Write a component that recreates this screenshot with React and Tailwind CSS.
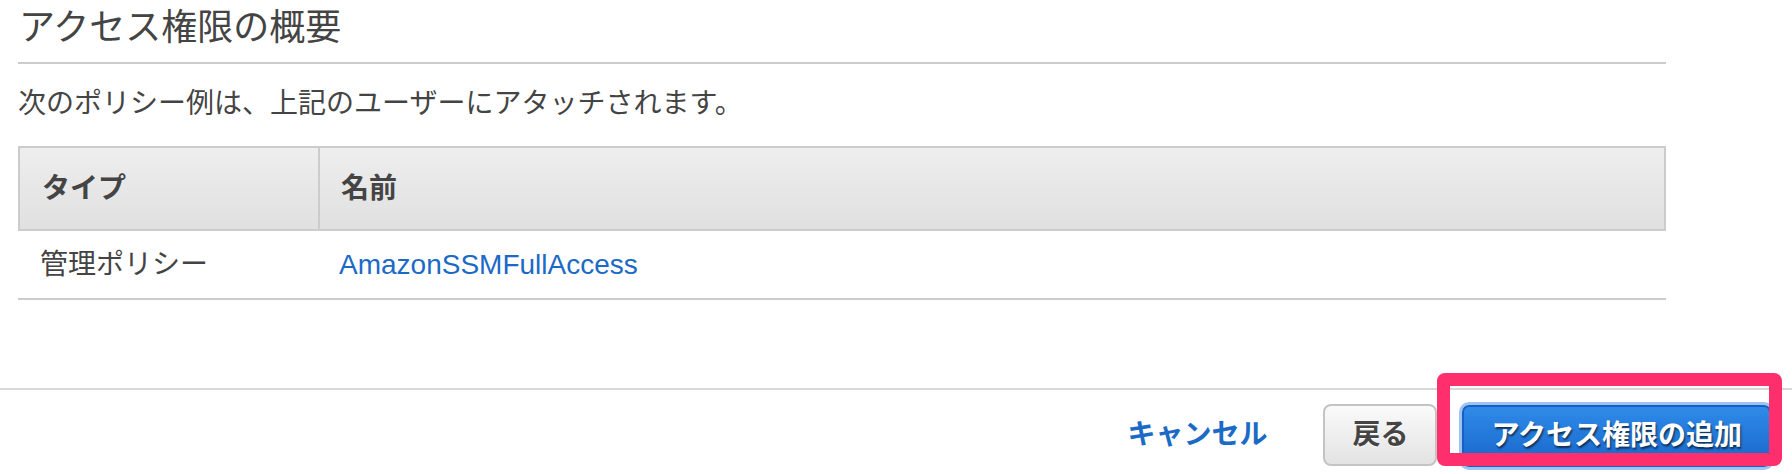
import React from 'react';

const font = "font-['Liberation_Sans','Noto_Sans_CJK_JP',sans-serif]";

export default function App() {
  return (
    <div className={`relative w-[1792px] h-[474px] bg-white overflow-hidden text-[#444] ${font}`}>
      {/* Summary section */}
      <div className="ml-[18px] w-[1648px]">
        <h2 className="h-[64px] border-b-2 border-[#ccc] text-[36px] leading-[56px] font-normal pl-[1px]">
          アクセス権限の概要
        </h2>
        <p className="mt-[20px] text-[28px] leading-[40px]">
          次のポリシー例は、上記のユーザーにアタッチされます。
        </p>

        {/* Table */}
        <div className="mt-[22px] text-[28px]">
          <div className="flex h-[85px] border-2 border-[#ccc] bg-gradient-to-b from-[#eeeeee] to-[#e0e0e0] font-bold">
            <div className="w-[300px] border-r-2 border-[#ccc] flex items-center pl-[22px]">タイプ</div>
            <div className="flex-1 flex items-center pl-[21px]">名前</div>
          </div>
          <div className="flex h-[69px] border-b-2 border-[#ccc]">
            <div className="w-[300px] flex items-center pl-[22px]">管理ポリシー</div>
            <div className="flex-1 flex items-center pl-[21px]">
              <a href="#" className="text-[#1b6ac6]">AmazonSSMFullAccess</a>
            </div>
          </div>
        </div>
      </div>

      {/* Footer */}
      <div className="mt-[88px] border-t-2 border-[#d8d8d8] flex justify-end items-start pt-[14px] pr-[21px] text-[28px] font-bold">
        <button className="h-[62px] mr-[56px] text-[#1b6ac6]">キャンセル</button>
        <button className="h-[62px] w-[114px] rounded-[8px] border-2 border-[#c4c4c4] bg-gradient-to-b from-[#fafafa] to-[#e3e3e3] text-[#444] [text-shadow:0_1px_0_#fff]">
          戻る
        </button>
        <button className="ml-[25px] mt-[1px] h-[62px] px-[27px] rounded-[7px] border-2 border-[#1560c2] bg-gradient-to-b from-[#2f8be9] to-[#1866c9] text-white shadow-[0_0_0_3px_#9dc3f3] [text-shadow:1px_2px_2px_rgba(0,0,0,0.6)]">
          アクセス権限の追加
        </button>
      </div>

      {/* Highlight annotation */}
      <div className="absolute left-[1437px] top-[373px] w-[345px] h-[93px] border-[13px] border-[#fe2f6c] rounded-[8px]" />
    </div>
  );
}
